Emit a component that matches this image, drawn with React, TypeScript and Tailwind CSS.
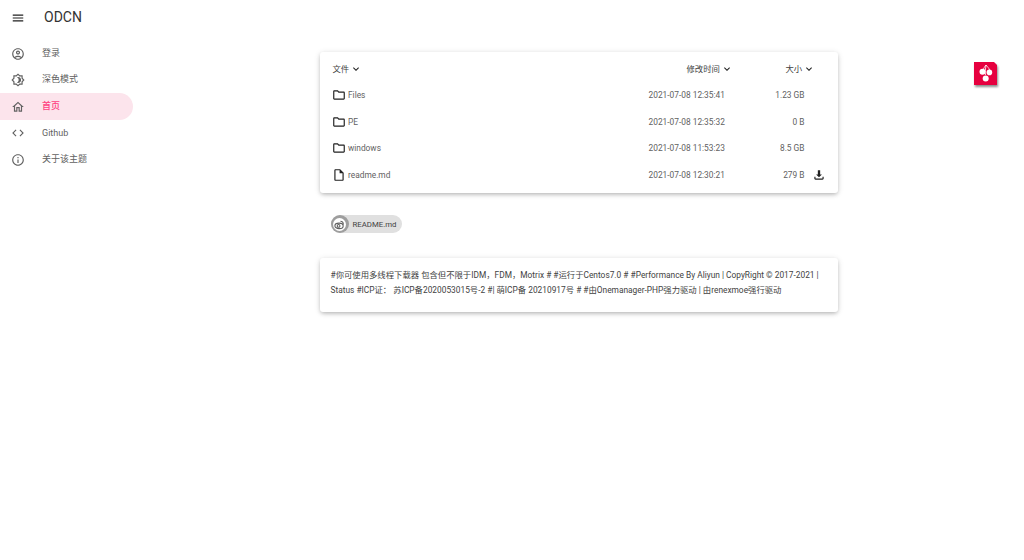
import type { ReactNode } from 'react'

const ICONS = {
  menu: 'M3 18h18v-2H3v2zm0-5h18v-2H3v2zm0-7v2h18V6H3z',
  account: 'M12 2C6.48 2 2 6.48 2 12s4.48 10 10 10 10-4.48 10-10S17.52 2 12 2zM7.35 18.5C8.66 17.56 10.26 17 12 17s3.34.56 4.65 1.5C15.34 19.44 13.74 20 12 20s-3.34-.56-4.65-1.5zm10.79-1.38C16.45 15.8 14.32 15 12 15s-4.45.8-6.14 2.12C4.7 15.73 4 13.95 4 12c0-4.42 3.58-8 8-8s8 3.58 8 8c0 1.95-.7 3.73-1.86 5.12zM12 6c-1.93 0-3.5 1.57-3.5 3.5S10.07 13 12 13s3.5-1.57 3.5-3.5S13.93 6 12 6zm0 5c-.83 0-1.5-.67-1.5-1.5S11.17 8 12 8s1.5.67 1.5 1.5S12.83 11 12 11z',
  dark: 'M20 8.69V4h-4.69L12 .69 8.69 4H4v4.69L.69 12 4 15.31V20h4.69L12 23.31 15.31 20H20v-4.69L23.31 12 20 8.69zm-2 5.79V18h-3.52L12 20.48 9.52 18H6v-3.52L3.52 12 6 9.52V6h3.52L12 3.52 14.48 6H18v3.52L20.48 12 18 14.48zM12.29 7c-.74 0-1.45.17-2.08.46 1.72.79 2.92 2.53 2.92 4.54s-1.2 3.75-2.92 4.54c.63.29 1.34.46 2.08.46 2.76 0 5-2.24 5-5s-2.24-5-5-5z',
  home: 'M12 5.69l5 4.5V18h-2v-6H9v6H7v-7.81l5-4.5M12 3L2 12h3v8h6v-6h2v6h6v-8h3L12 3z',
  code: 'M9.4 16.6L4.8 12l4.6-4.6L8 6l-6 6 6 6 1.4-1.4zm5.2 0l4.6-4.6-4.6-4.6L16 6l6 6-6 6-1.4-1.4z',
  info: 'M11 7h2v2h-2zm0 4h2v6h-2zm1-9C6.48 2 2 6.48 2 12s4.48 10 10 10 10-4.48 10-10S17.52 2 12 2zm0 18c-4.41 0-8-3.59-8-8s3.59-8 8-8 8 3.59 8 8-3.59 8-8 8z',
  expand: 'M16.59 8.59L12 13.17 7.41 8.59 6 10l6 6 6-6z',
  folder: 'M9.17 6l2 2H20v10H4V6h5.17M10 4H4c-1.1 0-1.99.9-1.99 2L2 18c0 1.1.9 2 2 2h16c1.1 0 2-.9 2-2V8c0-1.1-.9-2-2-2h-8l-2-2z',
  file: 'M14 2H6c-1.1 0-1.99.9-1.99 2L4 20c0 1.1.89 2 1.99 2H18c1.1 0 2-.9 2-2V8l-6-6zM6 20V4h7v5h5v11H6z',
  download: 'M4 15v3c0 1.1.9 2 2 2h12c1.1 0 2-.9 2-2v-3h-2v3H6v-3zM12 16l5-5h-3V4h-4v7H7z',
}

function Icon({ d, className }: { d: string; className: string }) {
  return (
    <svg viewBox="0 0 24 24" fill="currentColor" className={className}>
      <path d={d} />
    </svg>
  )
}

const navItems = [
  { icon: ICONS.account, label: '登录' },
  { icon: ICONS.dark, label: '深色模式' },
  { icon: ICONS.home, label: '首页', active: true },
  { icon: ICONS.code, label: 'Github' },
  { icon: ICONS.info, label: '关于该主题' },
]

const files = [
  { icon: ICONS.folder, name: 'Files', time: '2021-07-08 12:35:41', size: '1.23 GB' },
  { icon: ICONS.folder, name: 'PE', time: '2021-07-08 12:35:32', size: '0 B' },
  { icon: ICONS.folder, name: 'windows', time: '2021-07-08 11:53:23', size: '8.5 GB' },
  { icon: ICONS.file, name: 'readme.md', time: '2021-07-08 12:30:21', size: '279 B', download: true },
]

function SortLabel({ children }: { children: ReactNode }) {
  return (
    <span className="flex items-center text-[#424242]">
      {children}
      <Icon d={ICONS.expand} className="ml-[1px] h-[12px] w-[12px] text-[#212121]" />
    </span>
  )
}

export default function App() {
  return (
    <div className="relative flex min-h-[560px] bg-white font-['Roboto','Noto_Sans_CJK_SC',sans-serif] text-[9px] text-[#616161]">
      <aside className="w-[133px] shrink-0">
        <header className="flex h-[40.3px] items-center pb-[5px] pl-[11px]">
          <Icon d={ICONS.menu} className="h-[14px] w-[14px] text-[#212121]" />
          <span className="ml-[19px] text-[14px] text-[#333333]">ODCN</span>
        </header>
        <nav>
          {navItems.map(item => (
            <div
              key={item.label}
              className={
                item.active
                  ? 'flex h-[26.6px] items-center rounded-r-full bg-[#fce4ec] pl-[11px] font-medium text-[#ff4081]'
                  : 'flex h-[26.6px] items-center pl-[11px]'
              }
            >
              <Icon d={item.icon} className="h-[14px] w-[14px] text-[#616161]" />
              <span className="ml-[17px]">{item.label}</span>
            </div>
          ))}
        </nav>
      </aside>

      <main className="flex-1 pt-[52px]">
        <div className="mx-auto w-[518px] text-[8.35px]">
          <section className="rounded-[3px] bg-white pb-[5px] shadow-[0_2px_4px_-1px_rgba(0,0,0,0.25),0_1px_6px_rgba(0,0,0,0.12)]">
            <div className="flex h-[30px] items-center pl-[13px] pt-[5px]">
              <div className="flex-1">
                <SortLabel>文件</SortLabel>
              </div>
              <div className="w-[99px]">
                <SortLabel>修改时间</SortLabel>
              </div>
              <div className="w-[52px]">
                <SortLabel>大小</SortLabel>
              </div>
            </div>
            {files.map(file => (
              <div key={file.name} className="flex h-[26.6px] items-center pl-[12px]">
                <div className="flex flex-1 items-center">
                  <Icon d={file.icon} className="h-[14px] w-[14px] text-[#212121]" />
                  <span className="ml-[2.5px]">{file.name}</span>
                </div>
                <div className="w-[100px]">{file.time}</div>
                <div className="w-[56px] text-right">{file.size}</div>
                <div className="flex w-[33px] pl-[7px]">
                  {file.download && <Icon d={ICONS.download} className="h-[14px] w-[14px] text-[#212121]" />}
                </div>
              </div>
            ))}
          </section>

          <div className="mt-[22px] pl-[11px]">
            <div className="inline-flex h-[18px] items-center rounded-full bg-[#e0e0e0] pr-[6px] text-[7.8px] text-[#424242]">
              <span className="flex h-[18px] w-[18px] items-center justify-center rounded-full bg-[#9e9e9e]">
                <span className="flex h-[13px] w-[13px] items-center justify-center rounded-full bg-white">
                  <svg viewBox="0 0 24 24" className="h-[11px] w-[11px] text-[#616161]" fill="none" stroke="currentColor" strokeWidth="2.4">
                    <ellipse cx="11" cy="15" rx="9" ry="6" />
                    <circle cx="10" cy="15" r="3" />
                    <path d="M14 5c4 0 7 3 6 7" />
                  </svg>
                </span>
              </span>
              <span className="ml-[4px]">README.md</span>
            </div>
          </div>

          <section className="mt-[25px] rounded-[3px] bg-white px-[11px] pb-[14px] pt-[10px] leading-[15px] text-[#424242] shadow-[0_2px_4px_-1px_rgba(0,0,0,0.25),0_1px_6px_rgba(0,0,0,0.12)]">
            #你可使用多线程下载器 包含但不限于IDM，FDM，Motrix # #运行于Centos7.0 # #Performance By Aliyun | CopyRight © 2017-2021 | Status #ICP证： 苏ICP备2020053015号-2 #| 萌ICP备 20210917号 # #由Onemanager-PHP强力驱动 | 由renexmoe强行驱动
          </section>
        </div>
      </main>

      <div className="absolute left-[974px] top-[62px] h-[23px] w-[23px] drop-shadow-[1px_2px_1px_rgba(0,0,0,0.45)]">
        <svg viewBox="0 0 23 23" className="h-full w-full">
          <path d="M0 0H20L23 3V23H0Z" fill="#e6003f" />
          <circle cx="8.5" cy="9.8" r="3" fill="#fff" />
          <circle cx="15.4" cy="10.4" r="2.8" fill="#fff" />
          <circle cx="11.7" cy="16.4" r="3" fill="#fff" />
          <path d="M9.5 7C10.5 5 11 4 12 3M12 3C13.5 5 15 6 15.5 8M12 3C11.5 7 11 10 11.5 13" stroke="#fff" strokeWidth="0.8" fill="none" />
        </svg>
      </div>
    </div>
  )
}
